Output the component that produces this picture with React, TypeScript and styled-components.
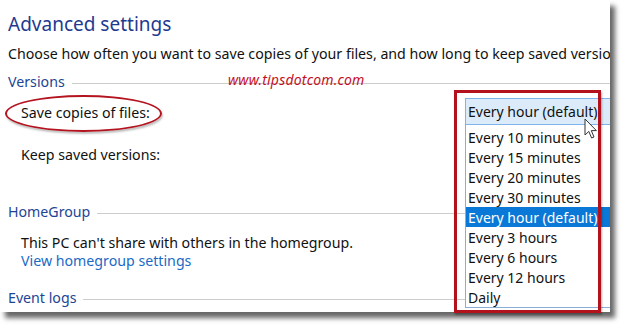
import * as React from "react";
import styled, { createGlobalStyle } from "styled-components";

const GlobalStyle = createGlobalStyle`
  html, body {
    margin: 0;
    padding: 0;
    background: #ffffff;
  }
  body {
    font-family: "Segoe UI", "Noto Sans", "Open Sans", sans-serif;
  }
`;

const options = [
  "Every 10 minutes",
  "Every 15 minutes",
  "Every 20 minutes",
  "Every 30 minutes",
  "Every hour (default)",
  "Every 3 hours",
  "Every 6 hours",
  "Every 12 hours",
  "Daily",
];

const selected = "Every hour (default)";

export default function App() {
  return (
    <Page>
      <GlobalStyle />
      <Window>
        <Title>Advanced settings</Title>
        <Description>
          Choose how often you want to save copies of your files, and how long
          to keep saved versions.
        </Description>

        <SectionHeader>
          <SectionLabel>Versions</SectionLabel>
          <Rule />
        </SectionHeader>
        <SelectRow>
          <Label>Save copies of files:</Label>
          <SelectWrap>
            <SelectBox>{selected}</SelectBox>
            <OptionList>
              {options.map((o) => (
                <OptionItem key={o} $active={o === selected}>
                  {o}
                </OptionItem>
              ))}
            </OptionList>
          </SelectWrap>
        </SelectRow>
        <Row $gap={18}>
          <Label>Keep saved versions:</Label>
        </Row>

        <SectionHeader $gap={39}>
          <SectionLabel>HomeGroup</SectionLabel>
          <Rule />
        </SectionHeader>
        <Row $gap={9}>
          <Label>This PC can't share with others in the homegroup.</Label>
        </Row>
        <Row>
          <LinkText>View homegroup settings</LinkText>
        </Row>

        <SectionHeader $gap={17}>
          <SectionLabel>Event logs</SectionLabel>
          <Rule />
        </SectionHeader>
      </Window>

      <Watermark>www.tipsdotcom.com</Watermark>
      <Ellipse />
      <Highlight />
      <Cursor width="14" height="22" viewBox="0 0 14 22">
        <path
          d="M1 1 L1 17 L4.8 13.4 L7.6 20 L10 19 L7.3 12.6 L12.4 12.6 Z"
          fill="#ffffff"
          stroke="#333333"
          strokeWidth="1"
          strokeLinejoin="round"
        />
      </Cursor>
    </Page>
  );
}

const Page = styled.div`
  position: relative;
  width: 625px;
  height: 329px;
  overflow: hidden;
  background: #ffffff;
`;

const Window = styled.div`
  width: 610px;
  height: 312px;
  background: #ffffff;
  box-shadow: 5px 6px 5px rgba(0, 0, 0, 0.6);
  overflow: hidden;
  padding: 9px 0 0 8px;
  box-sizing: border-box;
  display: flex;
  flex-direction: column;
`;

const Title = styled.div`
  font-size: 19px;
  line-height: 28px;
  color: #1e3a8f;
  white-space: nowrap;
  margin-top: 1px;
  margin-bottom: -1px;
`;

const Description = styled.div`
  margin-top: 7px;
  font-size: 14.2px;
  line-height: 20px;
  color: #111111;
  white-space: nowrap;
`;

const SectionHeader = styled.div<{ $gap?: number }>`
  margin-top: ${(p) => p.$gap ?? 8}px;
  display: flex;
  align-items: center;
  gap: 7px;
  height: 20px;
`;

const SectionLabel = styled.span`
  font-size: 14.2px;
  line-height: 20px;
  color: #1c4594;
  white-space: nowrap;
`;

const Rule = styled.div`
  flex: 1;
  height: 1px;
  background: #cdcdcd;
  margin-top: 2px;
`;

const Row = styled.div<{ $gap?: number }>`
  margin-top: ${(p) => p.$gap ?? 0}px;
  padding-left: 13px;
  display: flex;
  align-items: center;
  height: 20px;
`;

const SelectRow = styled.div`
  margin-top: 6px;
  padding-left: 13px;
  display: flex;
  align-items: center;
  height: 27px;
`;

const Label = styled.span`
  font-size: 14.2px;
  line-height: 20px;
  color: #111111;
  white-space: nowrap;
  margin-top: 3px;
`;

const LinkText = styled.span`
  font-size: 14.2px;
  line-height: 20px;
  color: #1a6ac6;
  white-space: nowrap;
`;

const SelectWrap = styled.div`
  position: relative;
  margin-left: auto;
  width: 150px;
  flex-shrink: 0;
  margin-right: -5px;
`;

const SelectBox = styled.div`
  height: 27px;
  box-sizing: border-box;
  border: 1px solid #7eb4ea;
  background: #dcebfa;
  padding: 0 0 0 2px;
  font-size: 14px;
  line-height: 25px;
  color: #111111;
  white-space: nowrap;
`;

const OptionList = styled.div`
  position: absolute;
  left: 0;
  top: 27px;
  width: 148px;
  box-sizing: border-box;
  border: 1px solid #8aaed6;
  border-top: none;
  background: #ffffff;
  padding: 2px 0 0 0;
  display: flex;
  flex-direction: column;
`;

const OptionItem = styled.div<{ $active?: boolean }>`
  height: 20px;
  line-height: 21px;
  padding-left: 2px;
  font-size: 14px;
  white-space: nowrap;
  color: ${(p) => (p.$active ? "#ffffff" : "#111111")};
  background: ${(p) => (p.$active ? "#0a78d7" : "transparent")};
`;

const Watermark = styled.div`
  position: absolute;
  left: 228px;
  top: 71px;
  font-size: 14px;
  line-height: 18px;
  font-style: italic;
  color: #c5101f;
  letter-spacing: 0.2px;
  white-space: nowrap;
`;

const Ellipse = styled.div`
  position: absolute;
  left: 5px;
  top: 95px;
  width: 157px;
  height: 37px;
  box-sizing: border-box;
  border: 2.5px solid #b3141f;
  border-radius: 50%;
  box-shadow: 1px 2px 2px rgba(0, 0, 0, 0.25);
`;

const Highlight = styled.div`
  position: absolute;
  left: 454px;
  top: 90px;
  width: 147px;
  height: 223px;
  box-sizing: border-box;
  border: 3px solid #b3121c;
  box-shadow: 1px 2px 2px rgba(0, 0, 0, 0.3);
`;

const Cursor = styled.svg`
  position: absolute;
  left: 584px;
  top: 118px;
`;
